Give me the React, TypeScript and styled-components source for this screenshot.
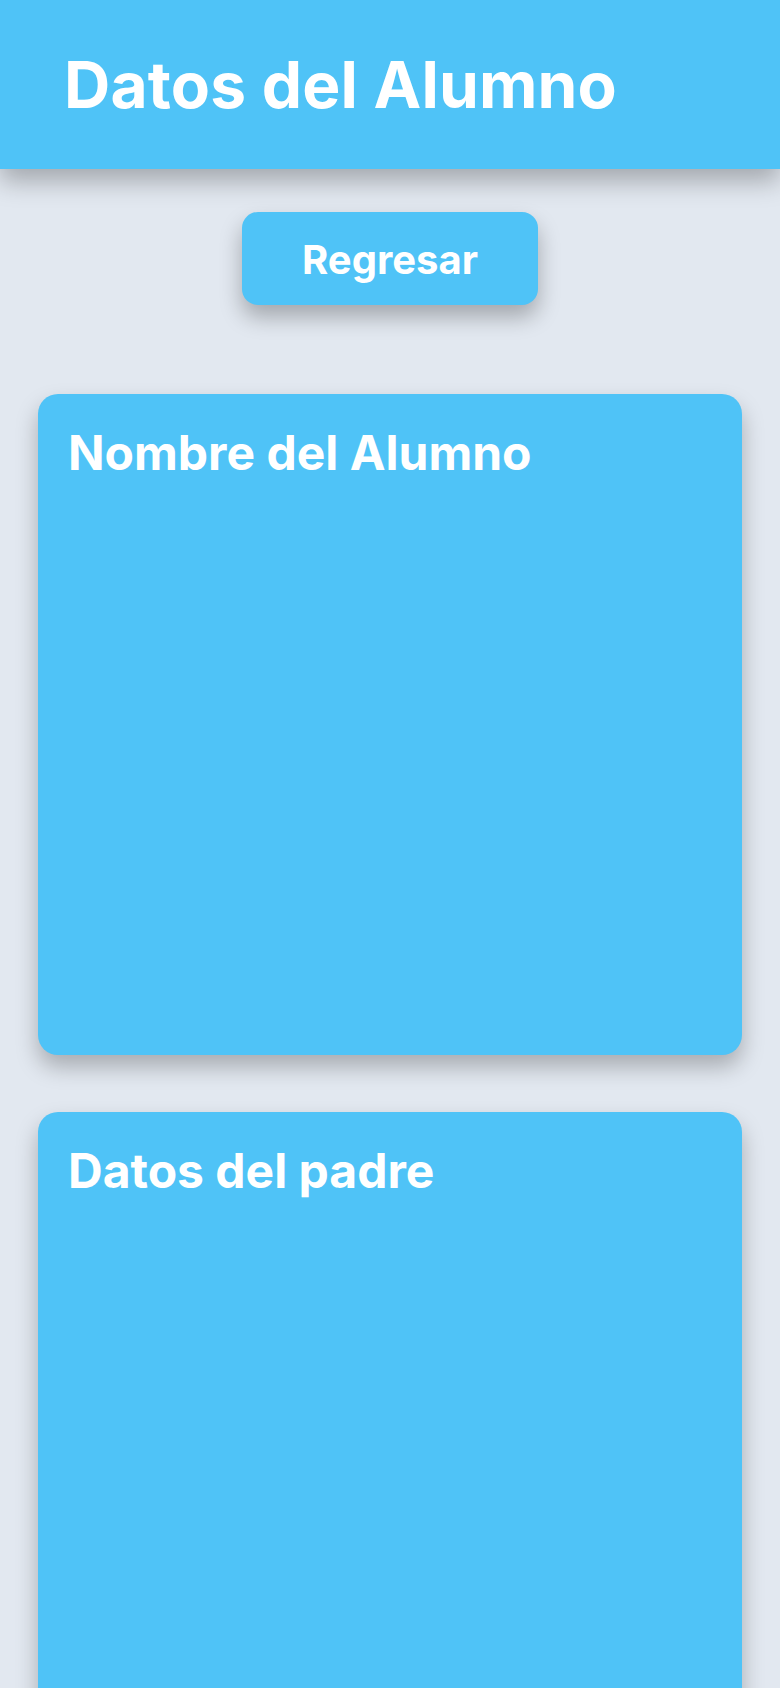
import React from 'react';
import styled, { createGlobalStyle } from 'styled-components';

const GlobalStyle = createGlobalStyle`
  * {
    box-sizing: border-box;
  }

  body {
    margin: 0;
    background: #e2e8f0;
    font-family: Inter, "Noto Sans", "Liberation Sans", sans-serif;
  }
`;

const Page = styled.div`
  min-height: 100vh;
  background: #e2e8f0;
  display: flex;
  flex-direction: column;
  align-items: center;
  padding-bottom: 40px;
`;

const Header = styled.header`
  width: 100%;
  height: 169px;
  background: #4fc3f7;
  display: flex;
  align-items: center;
  padding: 0 64px;
  box-shadow: 0 12px 24px rgba(0, 0, 0, 0.28);
`;

const Title = styled.h1`
  margin: 0;
  font-size: 64px;
  font-weight: 700;
  color: #ffffff;
  letter-spacing: 0.2px;
`;

const BackButton = styled.button`
  margin-top: 43px;
  border: none;
  border-radius: 16px;
  background: #4fc3f7;
  color: #ffffff;
  font-family: inherit;
  font-size: 40px;
  font-weight: 700;
  padding: 23px 60px 21px;
  box-shadow: 0 12px 22px rgba(0, 0, 0, 0.28);
  cursor: pointer;
`;

const CardList = styled.div`
  width: 100%;
  padding: 89px 38px 0;
  display: flex;
  flex-direction: column;
  gap: 57px;
`;

const Card = styled.section`
  height: 661px;
  background: #4fc3f7;
  border-radius: 20px;
  padding: 29px 30px;
  box-shadow: 0 12px 22px rgba(0, 0, 0, 0.26);
`;

const CardTitle = styled.h2`
  margin: 0;
  font-size: 48px;
  font-weight: 700;
  color: #ffffff;
`;

export default function App() {
  return (
    <Page>
      <GlobalStyle />
      <Header>
        <Title>Datos del Alumno</Title>
      </Header>
      <BackButton>Regresar</BackButton>
      <CardList>
        <Card>
          <CardTitle>Nombre del Alumno</CardTitle>
        </Card>
        <Card>
          <CardTitle>Datos del padre</CardTitle>
        </Card>
      </CardList>
    </Page>
  );
}
